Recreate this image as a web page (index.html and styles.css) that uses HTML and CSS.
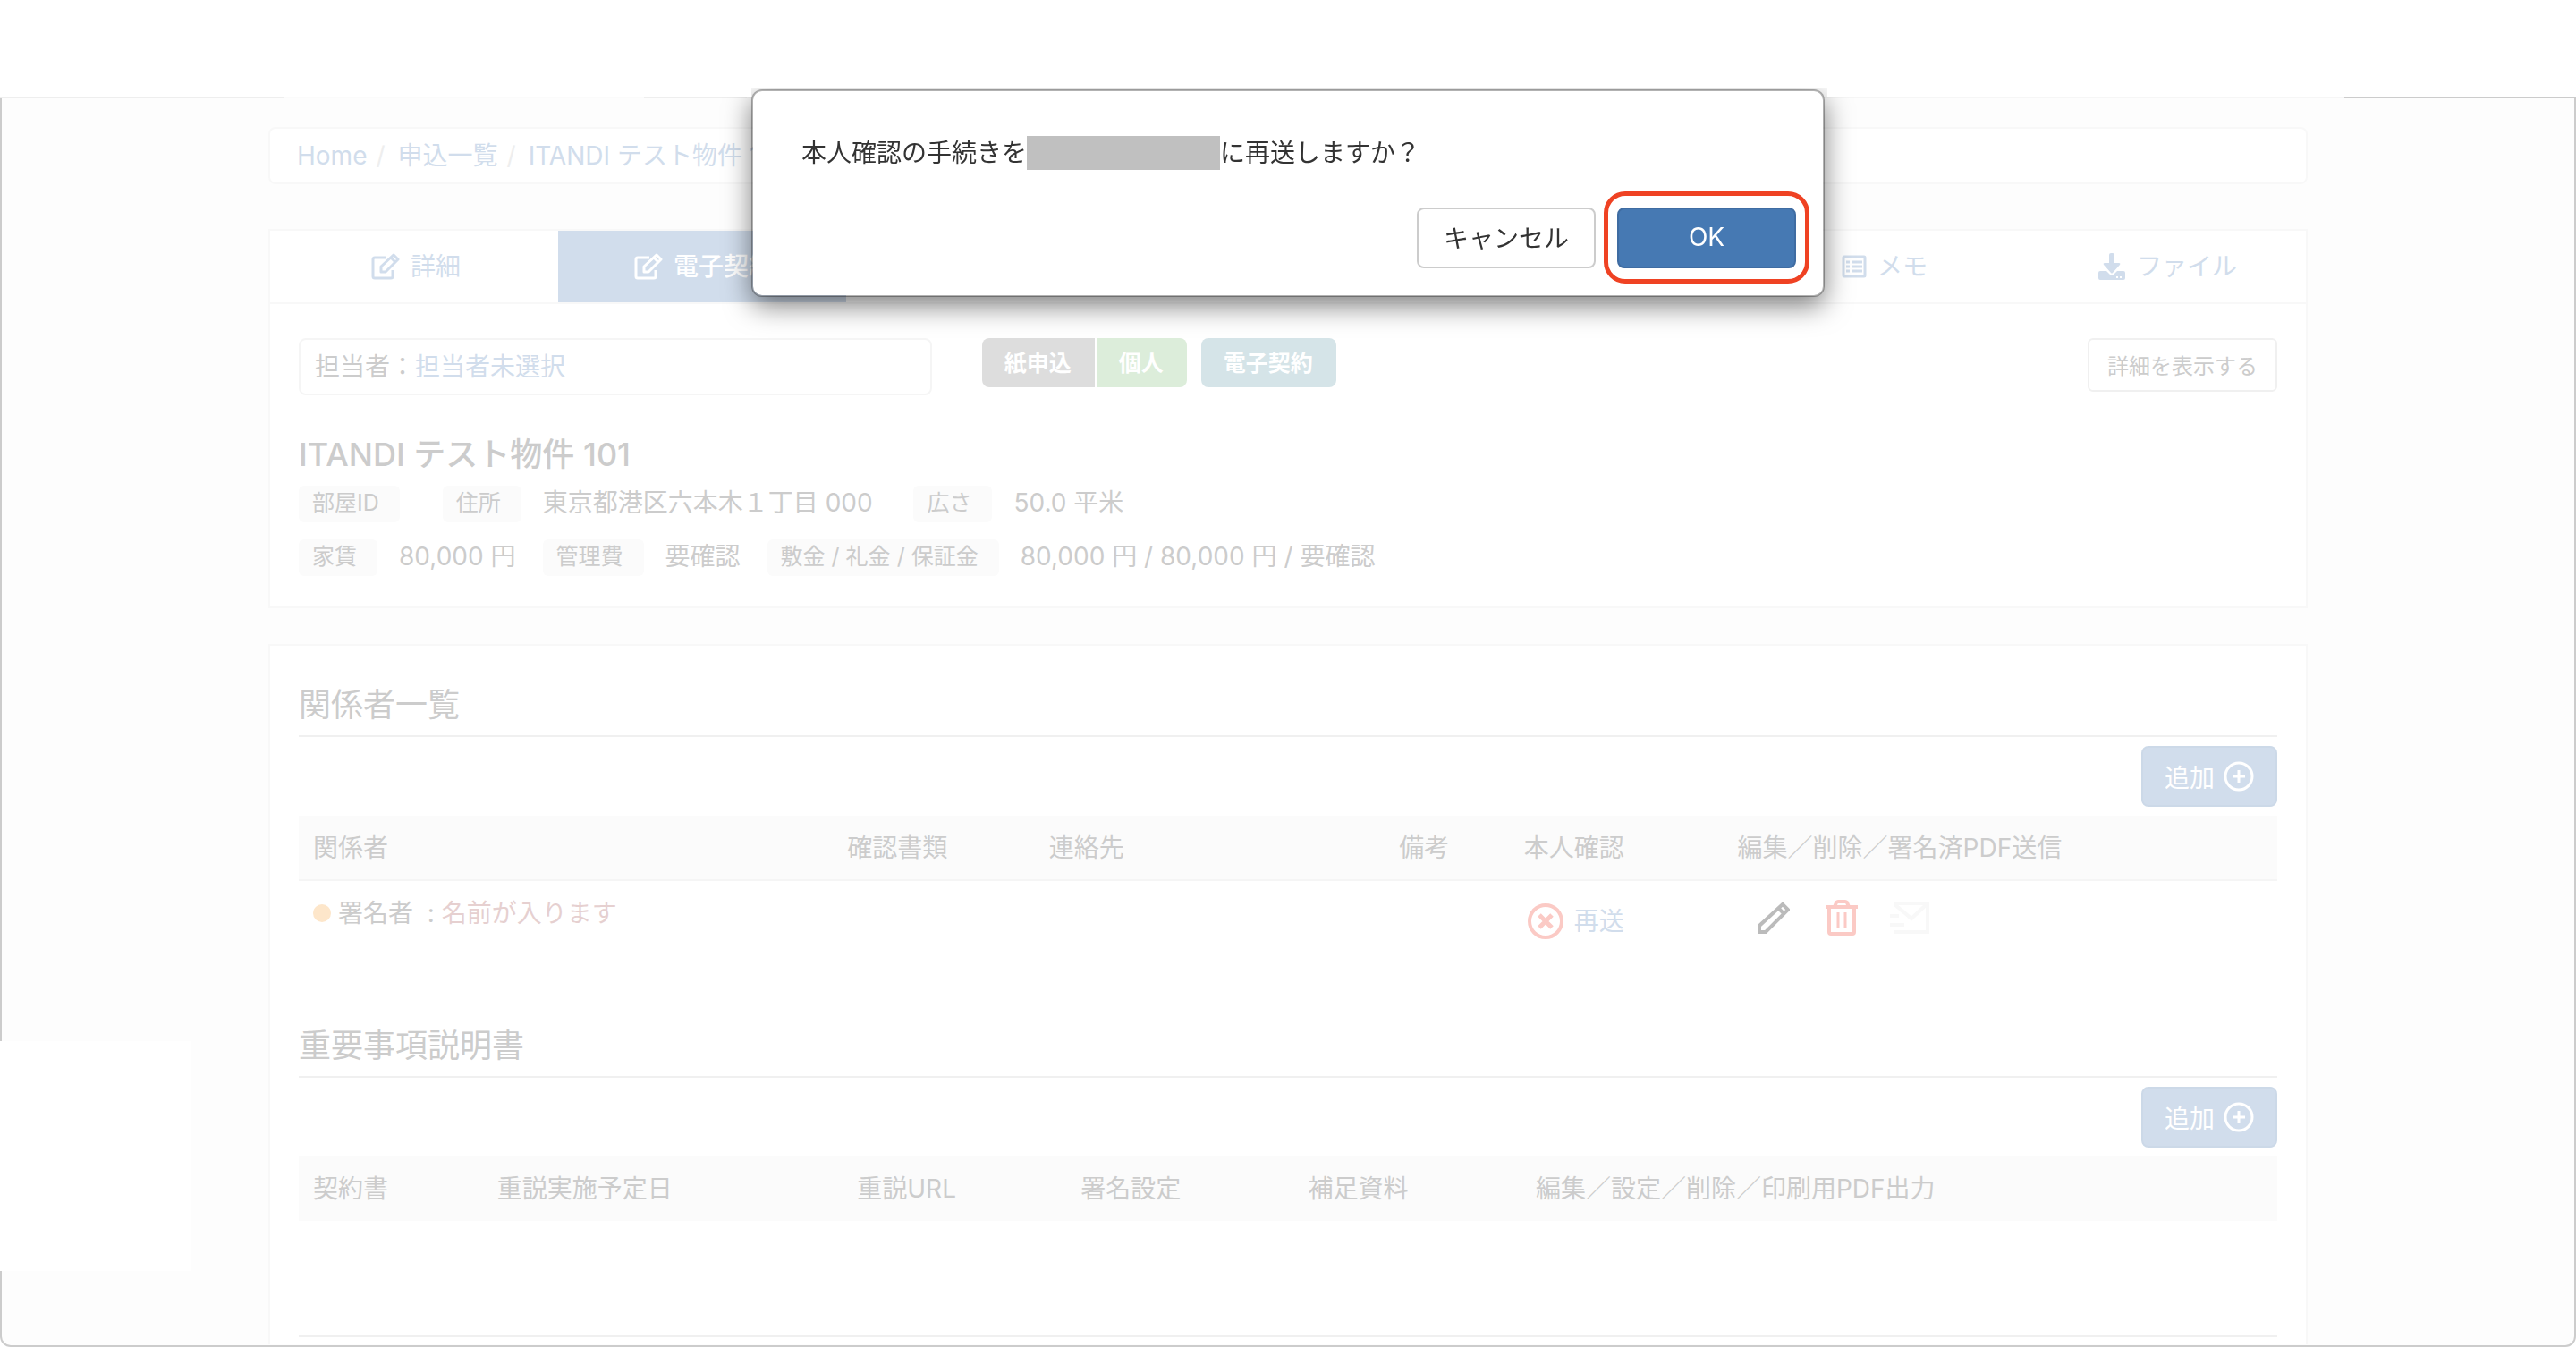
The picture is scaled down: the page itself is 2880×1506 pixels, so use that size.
FILE: index.html
```html
<!DOCTYPE html>
<html lang="ja">
<head>
    <meta charset="UTF-8">
    <meta name="viewport" content="width=device-width, initial-scale=1.0">
    <title>電子契約 - ITANDI</title>
    <link rel="stylesheet" href="styles.css">
</head>
<body>
    <div class="topbar"></div>
    <div class="edge"></div>
    <main class="frame">
        <div class="container">
            <nav class="breadcrumb">
                <a href="#">Home</a><span class="slash">/</span>
                <a href="#">申込一覧</a><span class="slash">/</span>
                <a href="#">ITANDI テスト物件 101</a>
            </nav>

            <nav class="tabs">
                <a href="#" class="tab">
                    <svg class="tab-icon" viewBox="0 0 32 30" fill="none" stroke="currentColor" stroke-width="3" stroke-linejoin="round"><path d="M17 5H4a2 2 0 0 0-2 2v19a2 2 0 0 0 2 2h18a2 2 0 0 0 2-2v-7"/><path d="M11 21v-6L25 2l5 5-14 14z"/><path d="M22 5l5 5"/></svg>
                    詳細
                </a>
                <a href="#" class="tab active">
                    <svg class="tab-icon" viewBox="0 0 32 30" fill="none" stroke="currentColor" stroke-width="3" stroke-linejoin="round"><path d="M17 5H4a2 2 0 0 0-2 2v19a2 2 0 0 0 2 2h18a2 2 0 0 0 2-2v-7"/><path d="M11 21v-6L25 2l5 5-14 14z"/><path d="M22 5l5 5"/></svg>
                    電子契約
                </a>
                <a href="#" class="tab tab-memo">
                    <svg class="tab-icon memo-icon" viewBox="0 0 28 26" fill="none" stroke="currentColor" stroke-width="3"><rect x="2" y="2" width="24" height="22" rx="1"/><path d="M5 8h4M5 13h4M5 18h4M11 8h12M11 13h12M11 18h12"/></svg>
                    メモ
                </a>
                <a href="#" class="tab">
                    <svg class="tab-icon" viewBox="0 0 30 30" fill="currentColor"><path d="M12 2q0-2 2-2h2q2 0 2 2v9h5q2 0 1 2l-8 9q-1 1-2 0l-8-9q-1-2 1-2h5z"/><path d="M2 20h7l4 4q2 2 4 0l4-4h7q2 0 2 2v6q0 2-2 2H2q-2 0-2-2v-6q0-2 2-2zM20 26h2v2h-2zM24 26h2v2h-2z" fill-rule="evenodd"/></svg>
                    ファイル
                </a>
            </nav>

            <section class="summary">
                <div class="summary-head">
                    <div class="staff">担当者：<a href="#">担当者未選択</a></div>
                    <div class="labels">
                        <span class="label gray">紙申込</span>
                        <span class="label green">個人</span>
                        <span class="label blue">電子契約</span>
                    </div>
                    <button type="button" class="btn-detail">詳細を表示する</button>
                </div>
                <h1>ITANDI テスト物件 101</h1>
                <dl>
                    <dt>部屋ID</dt><dd></dd>
                    <dt>住所</dt><dd>東京都港区六本木１丁目 000&nbsp;&nbsp;</dd>
                    <dt>広さ</dt><dd>50.0 平米</dd>
                </dl>
                <dl>
                    <dt>家賃</dt><dd>80,000 円</dd>
                    <dt>管理費</dt><dd>要確認</dd>
                    <dt>敷金 / 礼金 / 保証金</dt><dd>80,000 円 / 80,000 円 / 要確認</dd>
                </dl>
            </section>

            <section class="contract">
                <h2>関係者一覧</h2>
                <div class="actions">
                    <button type="button" class="btn-add">追加
                        <svg class="add-icon" viewBox="0 0 34 34" fill="none" stroke="currentColor" stroke-width="3"><circle cx="17" cy="17" r="15"/><path d="M17 10v14M10 17h14"/></svg>
                    </button>
                </div>
                <table class="people">
                    <thead>
                        <tr>
                            <th class="col-person">関係者</th>
                            <th class="col-papers">確認書類</th>
                            <th class="col-contact">連絡先</th>
                            <th class="col-note">備考</th>
                            <th class="col-verify">本人確認</th>
                            <th>編集／削除／署名済PDF送信</th>
                        </tr>
                    </thead>
                    <tbody>
                        <tr>
                            <td><div class="signer"><span class="dot"></span><span>署名者 &nbsp;: <span class="name">名前が入ります</span></span></div></td>
                            <td></td>
                            <td></td>
                            <td></td>
                            <td>
                                <div class="verify">
                                    <svg class="ng-icon" viewBox="0 0 40 40" fill="none" stroke="currentColor"><circle cx="20" cy="20" r="18" stroke-width="4"/><path d="M13 13l14 14M27 13L13 27" stroke-width="5"/></svg>
                                    <a href="#">再送</a>
                                </div>
                            </td>
                            <td>
                                <div class="tools">
                                    <button type="button" class="tool edit" aria-label="編集">
                                        <svg viewBox="0 0 36 36" width="36" height="36" fill="none" stroke="currentColor" stroke-width="4"><path d="M2 34v-7L28 3l6 6L9 34z"/><path d="M23 7l7 7"/></svg>
                                    </button>
                                    <button type="button" class="tool delete" aria-label="削除">
                                        <svg viewBox="0 0 36 40" width="36" height="40" fill="none" stroke="currentColor"><path d="M0 8h36" stroke-width="4"/><path d="M10 8l2-5q1-1 2-1h8q1 0 2 1l2 5M4 8v28q0 2 2 2h24q2 0 2-2V8" stroke-width="4"/><path d="M14 14v18M22 14v18" stroke-width="3"/></svg>
                                    </button>
                                    <button type="button" class="tool send" aria-label="署名済PDF送信" disabled>
                                        <svg viewBox="0 0 44 36" width="44" height="36" fill="none" stroke="currentColor" stroke-width="4"><path d="M4 2h38v32H4M5 3l19 16L41 3M0 16h10M0 26h16"/></svg>
                                    </button>
                                </div>
                            </td>
                        </tr>
                    </tbody>
                </table>

                <h2>重要事項説明書</h2>
                <div class="actions">
                    <button type="button" class="btn-add">追加
                        <svg class="add-icon" viewBox="0 0 34 34" fill="none" stroke="currentColor" stroke-width="3"><circle cx="17" cy="17" r="15"/><path d="M17 10v14M10 17h14"/></svg>
                    </button>
                </div>
                <table class="documents">
                    <thead>
                        <tr>
                            <th class="col-document">契約書</th>
                            <th class="col-date">重説実施予定日</th>
                            <th class="col-url">重説URL</th>
                            <th class="col-sign">署名設定</th>
                            <th class="col-sign">補足資料</th>
                            <th>編集／設定／削除／印刷用PDF出力</th>
                        </tr>
                    </thead>
                </table>
                <hr>
            </section>
        </div>
        <div class="widget"></div>
    </main>

    <div class="modal">
        <div class="dialog" role="dialog" aria-labelledby="message">
            <p id="message">本人確認の手続きを<span class="masked"></span>に再送しますか？</p>
            <div class="dialog-buttons">
                <button type="button" class="btn-cancel">キャンセル</button>
                <button type="button" class="btn-ok">OK</button>
            </div>
        </div>
    </div>
</body>
</html>
```
FILE: styles.css
```css
* {
    box-sizing: border-box;
}
body {
    display: flex;
    flex-direction: column;
    min-height: 100vh;
    margin: 0;
    background-color: #ffffff;
    color: #cccccc;
    font-family: Inter, "Noto Sans CJK JP", sans-serif;
    font-size: 28px;
    line-height: 38px;
}
a {
    color: #d1ddec;
    text-decoration: none;
}
button {
    font-family: inherit;
    font-size: 28px;
    cursor: pointer;
}
h1, h2, p, dl, dd {
    margin: 0;
}
.topbar {
    height: 108px;
}
.edge {
    height: 2px;
    background: linear-gradient(to right, #eeeeee 11%, #fbfbfb 11%, #fbfbfb 25%, #eeeeee 25%, #eeeeee 29%, #f6f6f6 29%, #f6f6f6 91%, #cccccc 91%);
}
.frame {
    position: relative;
    flex: 1;
    padding-top: 32px;
    background-color: #fdfdfd;
    border: 2px solid #cccccc;
    border-top: none;
    border-radius: 0 0 12px 12px;
}
.container {
    width: 80%;
    max-width: 2280px;
    margin: 0 auto;
}
.breadcrumb {
    display: flex;
    align-items: center;
    height: 64px;
    margin-bottom: 50px;
    padding: 0 30px;
    background-color: #ffffff;
    border: 2px solid #f8f8f8;
    border-radius: 8px;
}
.slash {
    margin: 0 14px 0 10px;
    color: #eeeeee;
}

/* タブ */
.tabs {
    display: grid;
    grid-template-columns: 322fr 322fr 1000fr 318fr 314fr;
    background-color: #ffffff;
    border: 2px solid #f8f8f8;
}
.tab {
    display: flex;
    align-items: center;
    justify-content: center;
    gap: 12px;
    height: 80px;
    padding-left: 4px;
}
.tab.active {
    background-color: #d1ddec;
    color: #ffffff;
    font-weight: 500;
}
.tab-memo {
    grid-column: 4;
}
.tab-icon {
    width: 32px;
    height: 30px;
}
.memo-icon {
    width: 28px;
    height: 26px;
}

/* 物件情報 */
.summary {
    margin-bottom: 40px;
    padding: 38px 32px 34px;
    background-color: #ffffff;
    border: 2px solid #f8f8f8;
    border-top: none;
}
.summary-head {
    display: flex;
    align-items: flex-start;
    margin-bottom: 46px;
}
.staff {
    width: 32%;
    padding: 11px 16px;
    border: 2px solid #f5f5f5;
    border-radius: 8px;
}
.labels {
    display: flex;
    margin-left: 56px;
}
.label {
    padding: 9px 26px 8px 25px;
    border-radius: 8px;
    color: #ffffff;
    font-size: 25px;
    font-weight: bold;
}
.label.gray {
    margin-right: 2px;
    background-color: #dddddd;
    border-radius: 8px 0 0 8px;
}
.label.green {
    margin-right: 16px;
    background-color: #dcedda;
    border-radius: 0 8px 8px 0;
}
.label.blue {
    background-color: #d5e4e8;
}
.btn-detail {
    height: 60px;
    margin-left: auto;
    padding: 0 20px 2px;
    background-color: #ffffff;
    border: 2px solid #f0f0f0;
    border-radius: 6px;
    color: #cccccc;
    font-size: 24px;
}
h1 {
    margin-bottom: 15px;
    font-size: 36px;
    font-weight: 500;
    line-height: 40px;
}
dl {
    display: flex;
    align-items: center;
}
dl + dl {
    margin-top: 19px;
}
dt {
    padding: 0 23px 2px 15px;
    background-color: #fbfbfb;
    border-radius: 6px;
    font-size: 25px;
    line-height: 39px;
}
dd {
    padding: 0 30px 3px 24px;
}
dd:empty {
    padding-right: 24px;
}

/* 契約 */
.contract {
    padding: 42px 32px 8px;
    background-color: #ffffff;
    border: 2px solid #f8f8f8;
    border-bottom: none;
}
h2 {
    padding-bottom: 10px;
    border-bottom: 2px solid #f0f0f0;
    font-size: 36px;
    font-weight: normal;
    line-height: 48px;
}
.actions {
    display: flex;
    justify-content: flex-end;
    padding: 10px 0;
}
.btn-add {
    display: flex;
    align-items: center;
    gap: 10px;
    height: 68px;
    padding: 0 24px;
    background-color: #d1ddec;
    border: 2px solid #ccd9e8;
    border-radius: 8px;
    color: #ffffff;
}
.add-icon {
    width: 34px;
    height: 34px;
}
table {
    width: 100%;
    table-layout: fixed;
    border-collapse: collapse;
}
th {
    height: 72px;
    padding: 0 16px;
    background-color: #fbfbfb;
    font-weight: normal;
    text-align: left;
    white-space: nowrap;
}
td {
    padding: 17px 16px 16px;
    border-top: 2px solid #f5f5f5;
    vertical-align: top;
}
.col-person { width: 27%; }
.col-papers { width: 10.2%; }
.col-contact { width: 17.7%; }
.col-note { width: 6.3%; }
.col-verify { width: 10.8%; }
.col-document { width: 9.3%; }
.col-date { width: 18.2%; }
.col-url { width: 11.3%; }
.col-sign { width: 11.5%; }
.people {
    margin-bottom: 79px;
}
.documents {
    margin-bottom: 128px;
}
.signer {
    display: flex;
    align-items: center;
    gap: 8px;
    white-space: nowrap;
}
.dot {
    width: 20px;
    height: 20px;
    background-color: #fde6ca;
    border-radius: 50%;
}
.name {
    color: #e6d0d0;
}
.verify {
    display: flex;
    align-items: center;
    gap: 12px;
    padding: 8px 0 0 4px;
}
.ng-icon {
    width: 40px;
    height: 40px;
    color: #fbcac5;
}
.tools {
    display: flex;
    align-items: center;
    gap: 36px;
    height: 48px;
    padding-left: 22px;
}
.tool {
    display: flex;
    padding: 0;
    background: none;
    border: none;
}
.edit {
    margin-right: 4px;
    color: #bbbbbb;
}
.delete {
    color: #fbcac5;
}
.send {
    color: #f8f8f8;
}
hr {
    margin: 0;
    border: none;
    border-top: 2px solid #f0f0f0;
}
.widget {
    position: absolute;
    bottom: 83px;
    left: -2px;
    width: 214px;
    height: 257px;
    background-color: #ffffff;
}

/* 確認ダイアログ */
.modal {
    position: fixed;
    top: 100px;
    left: 0;
    right: 0;
    display: flex;
    justify-content: center;
}
.dialog {
    width: 1200px;
    padding: 50px 30px 30px;
    background-color: #ffffff;
    background-clip: padding-box;
    border: 2px solid rgba(0, 0, 0, 0.3);
    border-radius: 12px;
    box-shadow: 0 10px 30px rgba(0, 0, 0, 0.5);
    color: #333333;
    clip-path: polygon(0 -2px, calc(100% + 3px) -2px, calc(100% + 3px) 8px, calc(100% + 60px) 8px, calc(100% + 60px) calc(100% + 60px), -60px calc(100% + 60px), -60px 8px, 0 8px);
}
.dialog p {
    display: flex;
    align-items: center;
    margin-bottom: 42px;
    padding-left: 24px;
}
.masked {
    width: 216px;
    height: 38px;
    background-color: #c0c0c0;
}
.dialog-buttons {
    display: flex;
    justify-content: flex-end;
    gap: 24px;
}
.btn-cancel,
.btn-ok {
    width: 200px;
    height: 68px;
    padding: 0 0 2px;
    border-radius: 8px;
}
.btn-cancel {
    background-color: #ffffff;
    border: 2px solid #cccccc;
    color: #333333;
}
.btn-ok {
    position: relative;
    background-color: #4679b3;
    border: 2px solid #3f6ca2;
    color: #ffffff;
}
.btn-ok::after {
    content: "";
    position: absolute;
    inset: -20px -17px -19px;
    border: 5px solid #ef4223;
    border-radius: 24px;
}
```
